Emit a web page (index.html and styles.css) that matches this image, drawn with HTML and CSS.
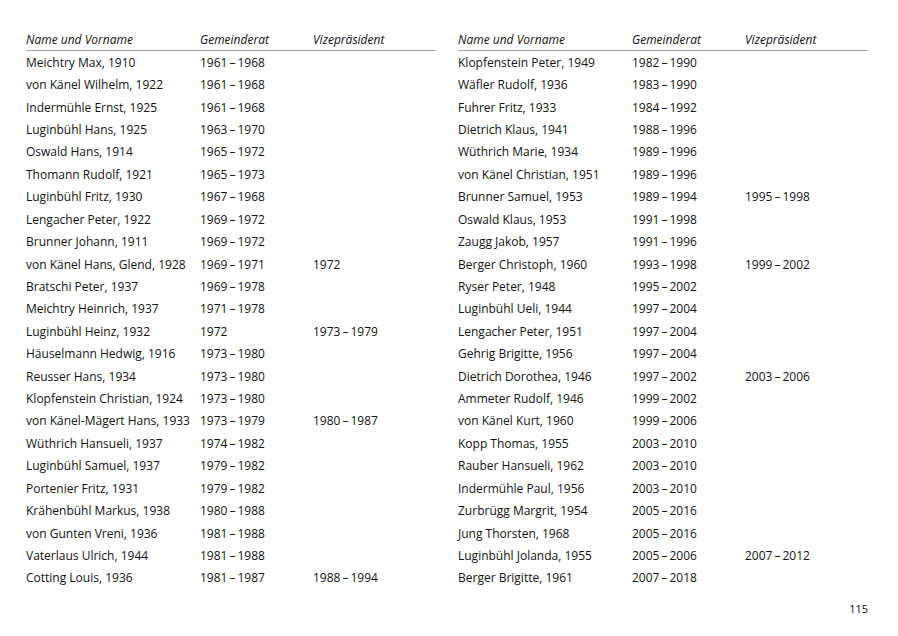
FILE: index.html
```html
<!DOCTYPE html>
<html lang="de">
<head>
<meta charset="utf-8">
<link rel="stylesheet" href="styles.css">
</head>
<body>
<div class="page">
  <div class="tables">
    <table class="list">
      <thead><tr><th>Name und Vorname</th><th>Gemeinderat</th><th>Vizepräsident</th></tr></thead>
      <tbody>
        <tr><td>Meichtry Max, 1910</td><td>1961&thinsp;–&thinsp;1968</td><td></td></tr>
        <tr><td>von Känel Wilhelm, 1922</td><td>1961&thinsp;–&thinsp;1968</td><td></td></tr>
        <tr><td>Indermühle Ernst, 1925</td><td>1961&thinsp;–&thinsp;1968</td><td></td></tr>
        <tr><td>Luginbühl Hans, 1925</td><td>1963&thinsp;–&thinsp;1970</td><td></td></tr>
        <tr><td>Oswald Hans, 1914</td><td>1965&thinsp;–&thinsp;1972</td><td></td></tr>
        <tr><td>Thomann Rudolf, 1921</td><td>1965&thinsp;–&thinsp;1973</td><td></td></tr>
        <tr><td>Luginbühl Fritz, 1930</td><td>1967&thinsp;–&thinsp;1968</td><td></td></tr>
        <tr><td>Lengacher Peter, 1922</td><td>1969&thinsp;–&thinsp;1972</td><td></td></tr>
        <tr><td>Brunner Johann, 1911</td><td>1969&thinsp;–&thinsp;1972</td><td></td></tr>
        <tr><td>von Känel Hans, Glend, 1928</td><td>1969&thinsp;–&thinsp;1971</td><td>1972</td></tr>
        <tr><td>Bratschi Peter, 1937</td><td>1969&thinsp;–&thinsp;1978</td><td></td></tr>
        <tr><td>Meichtry Heinrich, 1937</td><td>1971&thinsp;–&thinsp;1978</td><td></td></tr>
        <tr><td>Luginbühl Heinz, 1932</td><td>1972</td><td>1973&thinsp;–&thinsp;1979</td></tr>
        <tr><td>Häuselmann Hedwig, 1916</td><td>1973&thinsp;–&thinsp;1980</td><td></td></tr>
        <tr><td>Reusser Hans, 1934</td><td>1973&thinsp;–&thinsp;1980</td><td></td></tr>
        <tr><td>Klopfenstein Christian, 1924</td><td>1973&thinsp;–&thinsp;1980</td><td></td></tr>
        <tr><td>von Känel-Mägert Hans, 1933</td><td>1973&thinsp;–&thinsp;1979</td><td>1980&thinsp;–&thinsp;1987</td></tr>
        <tr><td>Wüthrich Hansueli, 1937</td><td>1974&thinsp;–&thinsp;1982</td><td></td></tr>
        <tr><td>Luginbühl Samuel, 1937</td><td>1979&thinsp;–&thinsp;1982</td><td></td></tr>
        <tr><td>Portenier Fritz, 1931</td><td>1979&thinsp;–&thinsp;1982</td><td></td></tr>
        <tr><td>Krähenbühl Markus, 1938</td><td>1980&thinsp;–&thinsp;1988</td><td></td></tr>
        <tr><td>von Gunten Vreni, 1936</td><td>1981&thinsp;–&thinsp;1988</td><td></td></tr>
        <tr><td>Vaterlaus Ulrich, 1944</td><td>1981&thinsp;–&thinsp;1988</td><td></td></tr>
        <tr><td>Cotting Louis, 1936</td><td>1981&thinsp;–&thinsp;1987</td><td>1988&thinsp;–&thinsp;1994</td></tr>
      </tbody>
    </table>
    <table class="list">
      <thead><tr><th>Name und Vorname</th><th>Gemeinderat</th><th>Vizepräsident</th></tr></thead>
      <tbody>
        <tr><td>Klopfenstein Peter, 1949</td><td>1982&thinsp;–&thinsp;1990</td><td></td></tr>
        <tr><td>Wäfler Rudolf, 1936</td><td>1983&thinsp;–&thinsp;1990</td><td></td></tr>
        <tr><td>Fuhrer Fritz, 1933</td><td>1984&thinsp;–&thinsp;1992</td><td></td></tr>
        <tr><td>Dietrich Klaus, 1941</td><td>1988&thinsp;–&thinsp;1996</td><td></td></tr>
        <tr><td>Wüthrich Marie, 1934</td><td>1989&thinsp;–&thinsp;1996</td><td></td></tr>
        <tr><td>von Känel Christian, 1951</td><td>1989&thinsp;–&thinsp;1996</td><td></td></tr>
        <tr><td>Brunner Samuel, 1953</td><td>1989&thinsp;–&thinsp;1994</td><td>1995&thinsp;–&thinsp;1998</td></tr>
        <tr><td>Oswald Klaus, 1953</td><td>1991&thinsp;–&thinsp;1998</td><td></td></tr>
        <tr><td>Zaugg Jakob, 1957</td><td>1991&thinsp;–&thinsp;1996</td><td></td></tr>
        <tr><td>Berger Christoph, 1960</td><td>1993&thinsp;–&thinsp;1998</td><td>1999&thinsp;–&thinsp;2002</td></tr>
        <tr><td>Ryser Peter, 1948</td><td>1995&thinsp;–&thinsp;2002</td><td></td></tr>
        <tr><td>Luginbühl Ueli, 1944</td><td>1997&thinsp;–&thinsp;2004</td><td></td></tr>
        <tr><td>Lengacher Peter, 1951</td><td>1997&thinsp;–&thinsp;2004</td><td></td></tr>
        <tr><td>Gehrig Brigitte, 1956</td><td>1997&thinsp;–&thinsp;2004</td><td></td></tr>
        <tr><td>Dietrich Dorothea, 1946</td><td>1997&thinsp;–&thinsp;2002</td><td>2003&thinsp;–&thinsp;2006</td></tr>
        <tr><td>Ammeter Rudolf, 1946</td><td>1999&thinsp;–&thinsp;2002</td><td></td></tr>
        <tr><td>von Känel Kurt, 1960</td><td>1999&thinsp;–&thinsp;2006</td><td></td></tr>
        <tr><td>Kopp Thomas, 1955</td><td>2003&thinsp;–&thinsp;2010</td><td></td></tr>
        <tr><td>Rauber Hansueli, 1962</td><td>2003&thinsp;–&thinsp;2010</td><td></td></tr>
        <tr><td>Indermühle Paul, 1956</td><td>2003&thinsp;–&thinsp;2010</td><td></td></tr>
        <tr><td>Zurbrügg Margrit, 1954</td><td>2005&thinsp;–&thinsp;2016</td><td></td></tr>
        <tr><td>Jung Thorsten, 1968</td><td>2005&thinsp;–&thinsp;2016</td><td></td></tr>
        <tr><td>Luginbühl Jolanda, 1955</td><td>2005&thinsp;–&thinsp;2006</td><td>2007&thinsp;–&thinsp;2012</td></tr>
        <tr><td>Berger Brigitte, 1961</td><td>2007&thinsp;–&thinsp;2018</td><td></td></tr>
      </tbody>
    </table>
  </div>
  <div class="folio">115</div>
</div>
</body>
</html>
```
FILE: styles.css
```css
html, body {
  margin: 0;
  padding: 0;
  background: #ffffff;
}
body {
  font-family: "Open Sans", "Noto Sans", "Liberation Sans", sans-serif;
  font-size: 12px;
  color: #111111;
}
.page {
  width: 898px;
  height: 636px;
  box-sizing: border-box;
  padding: 29px 30px 0 26px;
}
.tables {
  display: grid;
  grid-template-columns: 410px 410px;
  column-gap: 22px;
}
.list {
  border-collapse: collapse;
  table-layout: fixed;
  width: 410px;
}
.list th {
  font-weight: normal;
  font-style: italic;
  text-align: left;
  height: 21px;
  padding: 0;
  border-bottom: 1px solid #a0a0a0;
  vertical-align: middle;
}
.list th:nth-child(1), .list td:nth-child(1) { width: 174px; }
.list th:nth-child(2), .list td:nth-child(2) { width: 113px; }
.list td {
  height: 22.43px;
  padding: 0;
  white-space: nowrap;
  vertical-align: middle;
}
.folio {
  text-align: right;
  margin-top: 12px;
  font-size: 11px;
}
```
